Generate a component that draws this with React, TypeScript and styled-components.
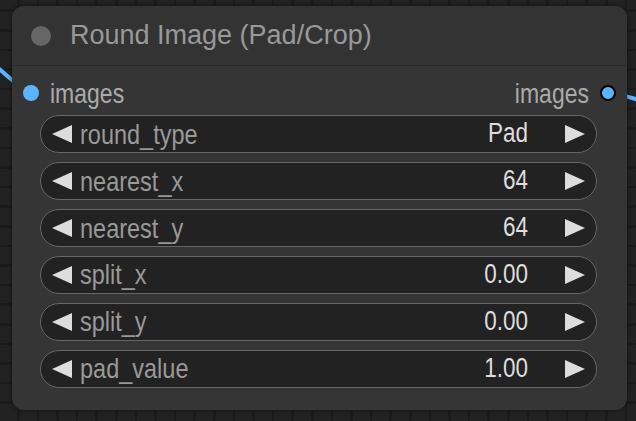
import React from 'react';
import styled, { createGlobalStyle } from 'styled-components';

const GlobalStyle = createGlobalStyle`
  html, body {
    margin: 0;
    padding: 0;
  }
  body {
    width: 636px;
    height: 421px;
    overflow: hidden;
    font-family: "Liberation Sans", Arial, sans-serif;
    background-color: #222;
    background-image:
      repeating-linear-gradient(90deg, transparent 0 17px, #1b1b1b 17px 19.6px),
      repeating-linear-gradient(0deg, transparent 0 17px, #1b1b1b 17px 19.6px);
  }
`;

const Canvas = styled.div`
  position: relative;
  width: 636px;
  height: 421px;
  padding: 6px 9px 11px 12px;
  box-sizing: border-box;
`;

const Wires = styled.svg`
  position: absolute;
  left: 0;
  top: 0;
  width: 636px;
  height: 421px;
`;

const Node = styled.div`
  position: relative;
  height: 404px;
  background: #353535;
  border-radius: 12px;
  box-shadow: 0 0 4px rgba(0, 0, 0, 0.5);
  display: flex;
  flex-direction: column;
`;

const TitleBar = styled.div`
  height: 59px;
  display: flex;
  align-items: center;
  gap: 19px;
  padding-left: 19px;
  background: #333;
  border-radius: 12px 12px 0 0;
  border-bottom: 1px solid #2a2a2a;
`;

const Dot = styled.div`
  width: 20px;
  height: 20px;
  border-radius: 50%;
  background: #666;
`;

const Title = styled.div`
  font-size: 27px;
  color: #999;
`;

const SlotRow = styled.div`
  height: 36px;
  display: flex;
  align-items: center;
  justify-content: space-between;
  margin-top: 9px;
  padding: 0 11px 0 11px;
`;

const Slot = styled.div<{ $out?: boolean }>`
  display: flex;
  align-items: center;
  gap: 11px;
  flex-direction: ${p => (p.$out ? 'row-reverse' : 'row')};
  font-size: 23px;
  color: #aaa;
`;

const TallText = styled.span`
  display: inline-block;
  transform: scaleY(1.2);
`;

const SlotDot = styled.div<{ $out?: boolean }>`
  width: 16px;
  height: 16px;
  border-radius: 50%;
  background: #5ab4ff;
  box-sizing: border-box;
  border: ${p => (p.$out ? '2px solid #000' : 'none')};
`;

const WidgetList = styled.div`
  display: flex;
  flex-direction: column;
  gap: 9px;
  padding: 4px 30px 0 28px;
`;

const Widget = styled.div`
  height: 38px;
  box-sizing: border-box;
  border: 1.5px solid #666;
  border-radius: 19px;
  background: #222;
  display: flex;
  align-items: center;
  padding: 0 11px 0 11px;
`;

const Label = styled(TallText)`
  flex: 1;
  color: #999;
  margin-left: 8px;
  font-size: 23.5px;
`;

const Value = styled(TallText)`
  color: #ddd;
  margin-right: 37px;
  font-size: 22.5px;
`;

const ArrowSvg = styled.svg`
  flex-shrink: 0;
`;

const Arrow = ({ dir }: { dir: 'left' | 'right' }) => (
  <ArrowSvg width="20" height="18" viewBox="0 0 20 18">
    {dir === 'left' ? (
      <polygon points="20,0 20,18 0,9" fill="#ddd" />
    ) : (
      <polygon points="0,0 0,18 20,9" fill="#ddd" />
    )}
  </ArrowSvg>
);

const widgets = [
  { name: 'round_type', value: 'Pad' },
  { name: 'nearest_x', value: '64' },
  { name: 'nearest_y', value: '64' },
  { name: 'split_x', value: '0.00' },
  { name: 'split_y', value: '0.00' },
  { name: 'pad_value', value: '1.00' },
];

const App = () => (
  <>
    <GlobalStyle />
    <Canvas>
      <Wires viewBox="0 0 636 421">
        <path d="M -10 62 C 5 72, 15 86, 31 92" stroke="#5ab4ff" strokeWidth="4" fill="none" />
        <path d="M 607 92 C 620 94, 628 97, 650 103" stroke="#5ab4ff" strokeWidth="4" fill="none" />
      </Wires>
      <Node>
        <TitleBar>
          <Dot />
          <Title>Round Image (Pad/Crop)</Title>
        </TitleBar>
        <SlotRow>
          <Slot>
            <SlotDot />
            <TallText>images</TallText>
          </Slot>
          <Slot $out>
            <SlotDot $out />
            <TallText>images</TallText>
          </Slot>
        </SlotRow>
        <WidgetList>
          {widgets.map(w => (
            <Widget key={w.name}>
              <Arrow dir="left" />
              <Label>{w.name}</Label>
              <Value>{w.value}</Value>
              <Arrow dir="right" />
            </Widget>
          ))}
        </WidgetList>
      </Node>
    </Canvas>
  </>
);

export default App;
